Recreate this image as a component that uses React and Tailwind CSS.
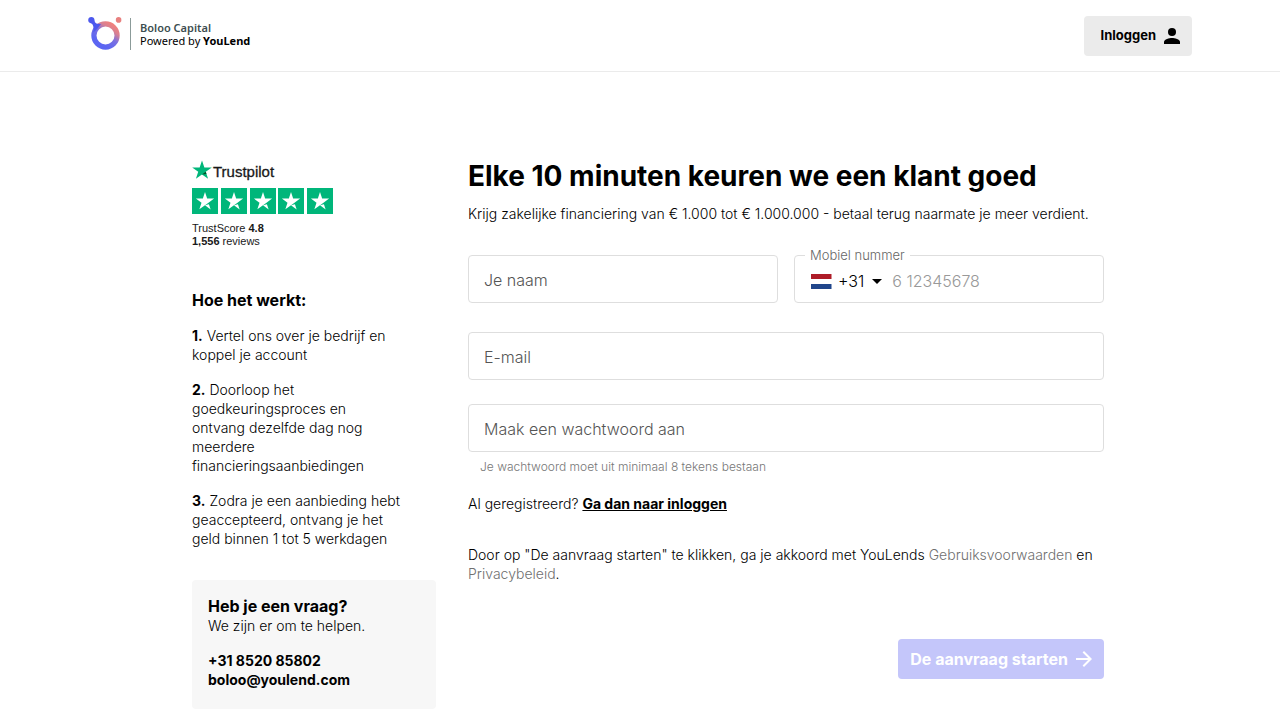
import React from "react";

const STAR = "M12 .5l2.850 8.400h8.900l-7.200 5.200 2.750 8.500-7.300-5.300-7.300 5.300 2.750-8.500-7.200-5.200h8.900z";

function BrandMark() {
  return (
    <svg className="h-9 w-9" viewBox="0 0 36 36" aria-hidden="true">
      <defs>
        <linearGradient id="ring" gradientUnits="userSpaceOnUse" x1="26" y1="9" x2="13" y2="27">
          <stop offset="0" stopColor="#f0807c" />
          <stop offset="0.25" stopColor="#d98092" />
          <stop offset="0.55" stopColor="#7c70e0" />
          <stop offset="1" stopColor="#5c66f2" />
        </linearGradient>
      </defs>
      <circle cx="17.500" cy="19.500" r="11.600" fill="none" stroke="url(#ring)" strokeWidth="5.200" />
      <path d="M.2 4.300C.2 2.300 1.500 1.100 3.300 1.100c2 0 3.100 1.200 3.200 3 .1 2.200 1.200 3.700 3.500 3.800l3 .1-4 5-3.600 3.600c.6-3.200.4-8.700-2.600-9.400C1.200 6.800.2 5.900.2 4.300z" fill="#4c58ee" />
      <circle cx="30.600" cy="3.900" r="2.800" fill="#e8807f" />
    </svg>
  );
}

function TrustStar() {
  return (
    <svg className="h-[26px] w-[26px]" viewBox="0 0 26 26" aria-hidden="true">
      <rect width="26" height="26" fill="#00b67a" />
      <path d="M13 4l2.150 6.600h6.950l-5.600 4.050L13 17.200l-5.650 4.100 2.150-6.650L3.900 10.600h6.950z" fill="#fff" />
      <path d="M13 17.200l3.950-1 1.700 5.200z" fill="#fff" />
    </svg>
  );
}

function TextField({ id, label, type }) {
  return (
    <input
      id={id}
      type={type}
      aria-label={label}
      placeholder={label}
      className="block h-12 w-full rounded border border-[#dedede] bg-white px-[15px] pt-0.5 text-base font-light text-black placeholder:text-[#555] placeholder:opacity-100"
    />
  );
}

function PhoneField() {
  return (
    <fieldset className="min-w-0 rounded border border-[#dedede] pl-2.5">
      <legend className="px-[5px] text-[13px] leading-4 font-light text-[#666]">
        <label htmlFor="phone">Mobiel nummer</label>
      </legend>
      <div className="flex h-[39px] items-center pb-[3px] pl-[5px] text-base font-light">
        <button type="button" aria-label="Landcode" className="flex items-center">
          <svg className="h-[15px] w-[22px]" viewBox="0 0 22 15" aria-hidden="true">
            <rect width="22" height="15" fill="#fff" />
            <rect x="1" width="20.500" height="5" fill="#ae1c28" />
            <rect x="1" y="10" width="20.500" height="5" fill="#21468b" />
          </svg>
          <span className="ml-1.5">+31</span>
          <svg className="ml-2 h-[5px] w-2.5" viewBox="0 0 10 5" aria-hidden="true">
            <path d="M0 0h10L5 5z" />
          </svg>
        </button>
        <input
          id="phone"
          type="tel"
          placeholder="6 12345678"
          className="ml-2.5 min-w-0 flex-1 placeholder:text-[#999] placeholder:opacity-100"
        />
      </div>
    </fieldset>
  );
}

const steps = [
  "Vertel ons over je bedrijf en koppel je account",
  "Doorloop het goedkeuringsproces en ontvang dezelfde dag nog meerdere financieringsaanbiedingen",
  "Zodra je een aanbieding hebt geaccepteerd, ontvang je het geld binnen 1 tot 5 werkdagen",
];

export default function App() {
  return (
    <div className="bg-white font-['Inter',sans-serif] text-sm leading-[19px] font-[360] text-black">
      <header className="border-b border-[#ebebeb]">
        <div className="mx-auto flex h-[71px] max-w-[1104px] items-center justify-between">
          <a href="#" className="flex items-center pb-1">
            <BrandMark />
            <span className="ml-1.5 h-8 w-px bg-[#8b9b99]" />
            <span className="ml-[9px] font-['Noto_Sans',sans-serif] text-[11px] leading-[13px] font-normal">
              <span className="block font-semibold text-[#3d4e50]">Boloo Capital</span>
              <span className="block">Powered by <b>YouLend</b></span>
            </span>
          </a>
          <button type="button" className="flex h-10 items-center gap-2 rounded bg-[#ebebeb] pr-3 pl-4 text-[13px] font-bold">
            Inloggen
            <svg className="h-4 w-4" viewBox="0 0 16 16" aria-hidden="true">
              <circle cx="8" cy="4" r="4" />
              <path d="M0 16v-2c0-2.700 5.300-4 8-4s8 1.300 8 4v2z" />
            </svg>
          </button>
        </div>
      </header>

      <div className="mx-auto flex max-w-[1104px] gap-8 pt-[88px] pr-[88px] pb-3 pl-[104px]">
        <aside className="w-[244px] shrink-0">
          <div className="font-['Liberation_Sans',sans-serif] text-[11px] leading-[13px] font-normal text-[#191919]">
            <div className="flex h-5 items-center gap-px">
              <svg className="h-5 w-5" viewBox="0 0 24 24" aria-hidden="true">
                <path d={STAR} fill="#00b67a" />
                <path d="M16.550 14.100l.8 2.600L12 17.300z" fill="#005128" />
              </svg>
              <span className="pt-1 text-[15px] leading-5 [-webkit-text-stroke:0.3px_#191919]">Trustpilot</span>
            </div>
            <div className="mt-2 flex w-[141px] justify-between">
              {[1, 2, 3, 4, 5].map((n) => <TrustStar key={n} />)}
            </div>
            <p className="mt-2">TrustScore <b>4.8</b></p>
            <p><b>1,556</b> reviews</p>
          </div>
          <h2 className="mt-[42px] text-base leading-5 font-bold">Hoe het werkt:</h2>
          <ol className="mt-4 flex flex-col gap-4 pr-[34px]">
            {steps.map((step, i) => (
              <li key={step}><b className="font-bold">{i + 1}.</b> {step}</li>
            ))}
          </ol>
          <section className="mt-8 rounded bg-[#f7f7f7] px-4 pt-4 pb-5">
            <h2 className="text-base leading-5 font-bold">Heb je een vraag?</h2>
            <p>We zijn er om te helpen.</p>
            <p className="mt-4 font-bold">
              <a href="tel:+31852085802" className="block">+31 8520 85802</a>
              <a href="mailto:boloo@youlend.com" className="block">boloo@youlend.com</a>
            </p>
          </section>
        </aside>

        <main className="min-w-0 flex-1">
          <h1 className="text-[28px] leading-8 font-bold">Elke 10 minuten keuren we een klant goed</h1>
          <p className="mt-3">Krijg zakelijke financiering van € 1.000 tot € 1.000.000 - betaal terug naarmate je meer verdient.</p>
          <form>
            <div className="mt-6 grid grid-cols-2 items-end gap-4">
              <TextField id="name" label="Je naam" type="text" />
              <PhoneField />
            </div>
            <div className="mt-[29px]">
              <TextField id="email" label="E-mail" type="email" />
            </div>
            <div className="mt-6">
              <TextField id="password" label="Maak een wachtwoord aan" type="password" />
              <p className="mt-[5px] pl-3 text-xs leading-5 text-[#777]">Je wachtwoord moet uit minimaal 8 tekens bestaan</p>
            </div>
            <p className="mt-[17px]">
              Al geregistreerd? <a href="#" className="font-bold underline">Ga dan naar inloggen</a>
            </p>
            <p className="mt-8">
              Door op "De aanvraag starten" te klikken, ga je akkoord met YouLends{" "}
              <a href="#" className="text-[#707070]">Gebruiksvoorwaarden</a> en{" "}
              <a href="#" className="text-[#707070]">Privacybeleid</a>.
            </p>
            <div className="mt-14 flex justify-end">
              <button type="submit" disabled className="flex h-10 items-center gap-2 rounded bg-[#c4c6fa] px-3 text-base font-bold text-white">
                De aanvraag starten
                <svg className="h-4 w-4" viewBox="0 0 16 16" fill="none" stroke="currentColor" strokeWidth="2" aria-hidden="true">
                  <path d="M0 8h14.500M7.300.7L14.600 8l-7.300 7.300" />
                </svg>
              </button>
            </div>
          </form>
        </main>
      </div>
    </div>
  );
}
